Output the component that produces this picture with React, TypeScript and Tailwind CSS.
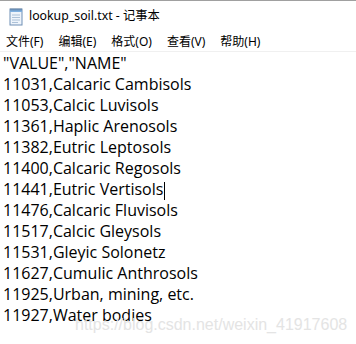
const lines = [
  '"VALUE","NAME"',
  '11031,Calcaric Cambisols',
  '11053,Calcic Luvisols',
  '11361,Haplic Arenosols',
  '11382,Eutric Leptosols',
  '11400,Calcaric Regosols',
  '11441,Eutric Vertisols',
  '11476,Calcaric Fluvisols',
  '11517,Calcic Gleysols',
  '11531,Gleyic Solonetz',
  '11627,Cumulic Anthrosols',
  '11925,Urban, mining, etc.',
  '11927,Water bodies',
];

const menus = ['文件(F)', '编辑(E)', '格式(O)', '查看(V)', '帮助(H)'];

function NotepadIcon() {
  return (
    <svg width="20" height="20" viewBox="0 0 20 20">
      <rect x="4" y="2" width="12" height="16" fill="#eef4fb" stroke="#6f8fb5" />
      <rect x="4" y="2" width="12" height="3" fill="#7fb0e0" />
      <path d="M6 8h8M6 10.5h8M6 13h8M6 15.5h6" stroke="#9bb4cf" strokeWidth="0.8" />
      <path d="M5 1.5v2M7 1.5v2M9 1.5v2M11 1.5v2M13 1.5v2M15 1.5v2" stroke="#4a5e78" strokeWidth="0.8" />
    </svg>
  );
}

export default function App() {
  return (
    <div className="w-[356px] h-[344px] bg-white overflow-hidden relative" style={{ fontFamily: '"Noto Sans", "Noto Sans CJK SC", sans-serif' }}>
      <div className="h-px bg-[#a0a0a0]" />
      <div className="flex items-center h-[31px] pl-[6px] gap-[3px]">
        <NotepadIcon />
        <span className="text-[12.3px] text-black">lookup_soil.txt - 记事本</span>
      </div>
      <div className="flex items-center h-[19px] pl-[6px] gap-[15px] text-[12px] text-black">
        {menus.map((m) => (
          <span key={m}>{m}</span>
        ))}
      </div>
      <div className="h-[1px] bg-[#f0f0f0]" />
      <div className="pl-[3px] pt-[1px] text-[16px] leading-[21px] text-black" style={{ fontFamily: '"Open Sans", "Noto Sans", sans-serif' }}>
        {lines.map((l, i) => (
          <div key={i} className="whitespace-pre">
            {l}
            {i === 6 && <span className="inline-block w-px h-[18px] bg-black align-middle ml-[1px]" />}
          </div>
        ))}
      </div>
      <div className="absolute left-[75px] top-[313px] text-[16px] text-[#e4e4e4] pointer-events-none" style={{ fontFamily: '"Liberation Sans", Arial, sans-serif' }}>
        https://blog.csdn.net/weixin_41917608
      </div>
    </div>
  );
}
